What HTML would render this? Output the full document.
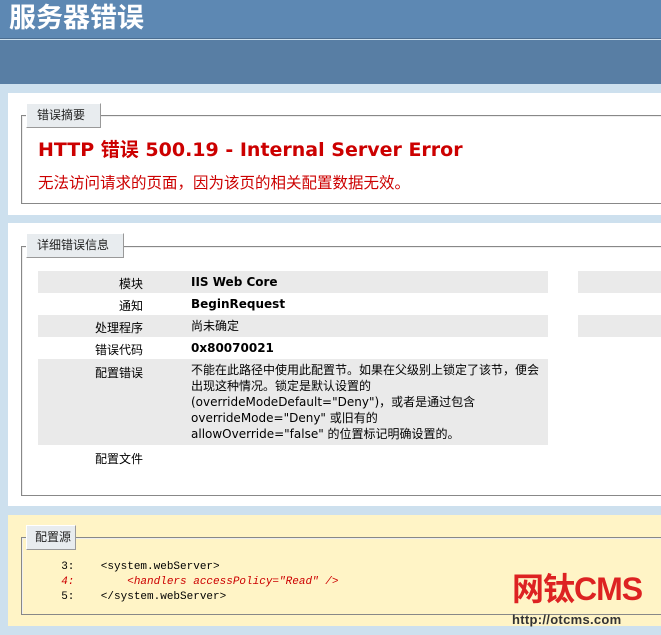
<!DOCTYPE html>
<html><head><meta charset="utf-8"><style>
*{margin:0;padding:0;box-sizing:border-box}
body{width:661px;height:635px;overflow:hidden;background:#cde0ee;font-family:"Liberation Sans","Noto Sans CJK SC",sans-serif;font-size:12px;color:#000;position:relative}
.h1{position:absolute;left:0;top:0;width:661px;height:39px;background:#5d88b3;border-bottom:1px solid #4a6d91}
.h1 span{position:absolute;left:9px;top:1px;font-size:27px;font-weight:bold;color:#fff;line-height:34px}
.h2{position:absolute;left:0;top:40px;width:661px;height:44px;background:#587ea4}
.panel{position:absolute;left:8px;width:660px;background:#fff}
.fs{position:absolute;left:21px;width:660px;border:1px solid #888;border-right:none;box-shadow:inset 1px 1px 0 #eee}
.lg{position:absolute;left:26px;height:25px;background:#e8ecef;border:1px solid #999;border-top-color:#fff;border-left-color:#fff;font-size:12px;line-height:23px;padding-left:10px;color:#222;white-space:nowrap}
.red{color:#c00;position:absolute;left:38px;white-space:nowrap}
.row{position:absolute;left:38px;width:510px}
.g{background:#eaeaea}
.lab{position:absolute;text-align:right;font-size:12px;white-space:nowrap}
.val{position:absolute;font-family:"DejaVu Sans","Noto Sans CJK SC",sans-serif;font-size:12px;font-weight:bold;line-height:16px}
.code{position:absolute;font-family:"Liberation Mono","Noto Sans CJK SC",monospace;font-size:11px;white-space:pre}
</style></head><body>
<div class="h1"><span>服务器错误</span></div>
<div class="h2"></div>

<div class="panel" style="top:93px;height:122px"></div>
<div class="fs" style="top:115px;height:89px"></div>
<div class="lg" style="top:103px;width:75px">错误摘要</div>
<div class="red" style="top:138px;font-family:'DejaVu Sans','Noto Sans CJK SC',sans-serif;font-size:19px;font-weight:bold;line-height:24px">HTTP 错误 500.19 - Internal Server Error</div>
<div class="red" style="top:174px;font-size:15.5px;line-height:20px">无法访问请求的页面，因为该页的相关配置数据无效。</div>

<div class="panel" style="top:223px;height:283px"></div>
<div class="fs" style="top:246px;height:250px"></div>
<div class="lg" style="top:233px;width:98px">详细错误信息</div>
<div class="row g" style="top:271px;height:22px"></div>
<div class="row g" style="top:315px;height:22px"></div>
<div class="row g" style="top:359px;height:86px"></div>
<div class="g" style="position:absolute;left:578px;top:271px;width:90px;height:22px"></div>
<div class="g" style="position:absolute;left:578px;top:315px;width:90px;height:22px"></div>
<div class="lab" style="left:0;width:143px;top:275px">模块</div><div class="val" style="left:191px;top:274px">IIS Web Core</div>
<div class="lab" style="left:0;width:143px;top:297px">通知</div><div class="val" style="left:191px;top:296px">BeginRequest</div>
<div class="lab" style="left:0;width:143px;top:319px">处理程序</div><div class="val" style="left:191px;top:318px;font-weight:normal">尚未确定</div>
<div class="lab" style="left:0;width:143px;top:341px">错误代码</div><div class="val" style="left:191px;top:340px">0x80070021</div>
<div class="lab" style="left:0;width:143px;top:364px">配置错误</div><div class="val" style="left:191px;top:362px;width:355px;font-weight:normal">不能在此路径中使用此配置节。如果在父级别上锁定了该节，便会出现这种情况。锁定是默认设置的 (overrideModeDefault="Deny")，或者是通过包含 overrideMode="Deny" 或旧有的<br>allowOverride="false" 的位置标记明确设置的。</div>
<div class="lab" style="left:0;width:143px;top:450px">配置文件</div>

<div class="panel" style="top:515px;height:111px;background:#fff4c6"></div>
<div class="fs" style="top:537px;height:78px"></div>
<div class="lg" style="top:525px;width:50px;padding-left:8px">配置源</div>
<div class="code" style="left:48px;top:560px;line-height:15px">  3:    &lt;system.webServer&gt;
<span style="color:#c00;font-style:italic">  4:        &lt;handlers accessPolicy="Read" /&gt;</span>
  5:    &lt;/system.webServer&gt;</div>
<div style="position:absolute;left:512px;top:570px;font-size:32px;font-weight:bold;color:#d22;line-height:38px;letter-spacing:-1px">网钛CMS</div>
<div style="position:absolute;left:512px;top:612px;font-size:13px;font-weight:bold;color:#333;line-height:15px;letter-spacing:0.3px">http://otcms.com</div>
</body></html>
